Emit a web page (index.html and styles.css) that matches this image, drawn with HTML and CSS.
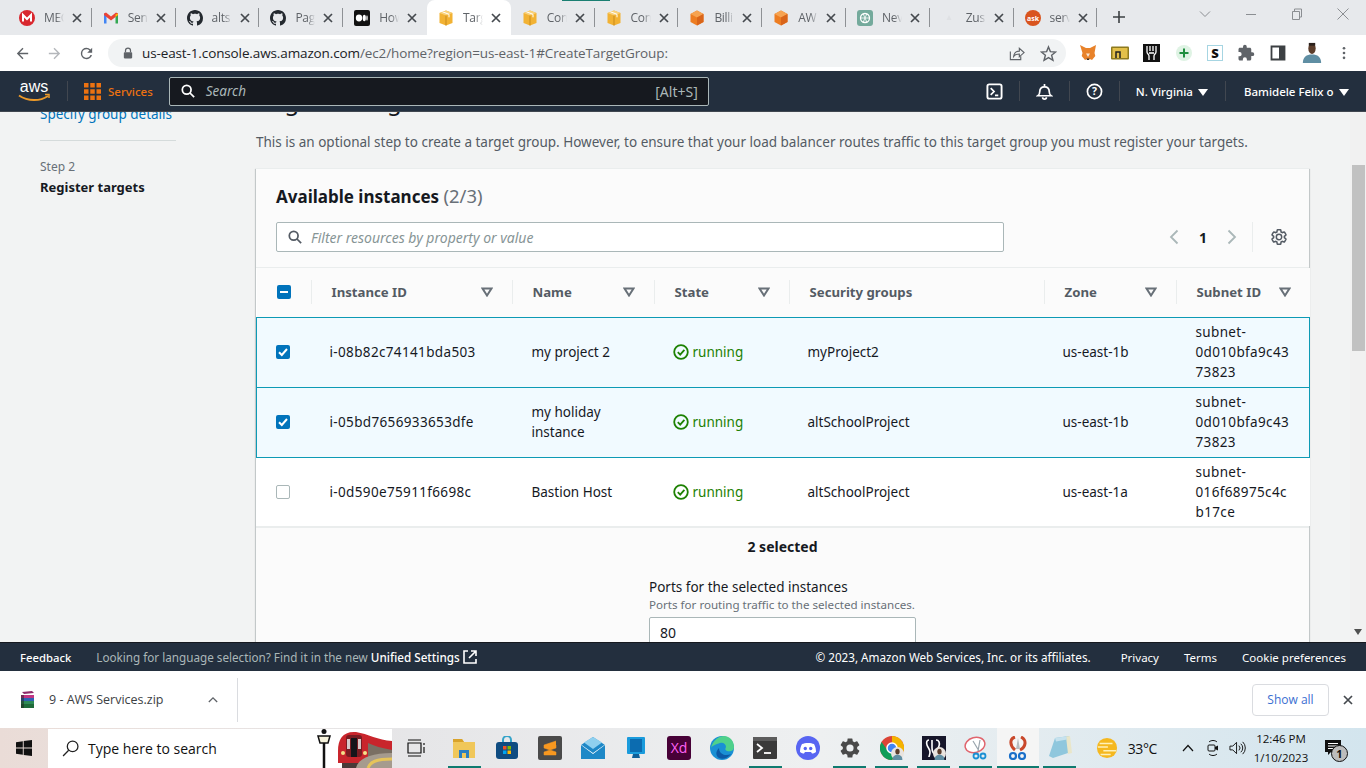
FILE: index.html
```html
<!DOCTYPE html>
<html lang="en">
<head>
    <meta charset="UTF-8">
    <meta name="viewport" content="width=device-width, initial-scale=1.0">
    <title>Target groups | EC2 Management Console</title>
    <link rel="stylesheet" href="styles.css">
</head>
<body>
    <svg class="sprite" aria-hidden="true">
        <symbol id="box" viewBox="0 0 16 16"><path d="M8 0.5 14.5 3v10L8 15.5 1.500 13V3z" fill="#f2b233"/><path d="M8 0.5 14.500 3 8 5.500 1.500 3z" fill="#f9d27c"/><path d="M8 5.500v10" stroke="#c98a1b"/><path d="M4.500 1.800 11 4.300v3" stroke="#fff" fill="none"/></symbol>
        <symbol id="cube" viewBox="0 0 16 16"><path d="M8 0.500 14.500 4v8L8 15.500 1.500 12V4z" fill="#ed7d22"/><path d="M8 0.500 14.500 4 8 7.500 1.500 4z" fill="#f6a351"/><path d="M8 7.500v8L14.500 12V4z" fill="#d9651a"/></symbol>
        <symbol id="github" viewBox="0 0 16 16"><path fill="#24292f" d="M8 0C3.580 0 0 3.580 0 8c0 3.540 2.290 6.530 5.470 7.590.4.070.55-.17.55-.38 0-.19-.01-.82-.01-1.490-2.010.37-2.530-.49-2.690-.94-.09-.23-.48-.94-.82-1.130-.28-.15-.68-.52-.01-.53.63-.01 1.080.58 1.230.82.720 1.210 1.870.87 2.330.66.070-.52.280-.87.510-1.070-1.780-.2-3.640-.89-3.640-3.950 0-.87.310-1.590.820-2.150-.08-.2-.36-1.020.08-2.120 0 0 .67-.21 2.200.82.640-.18 1.320-.27 2-.27.680 0 1.360.09 2 .27 1.530-1.040 2.200-.82 2.200-.82.44 1.100.16 1.920.08 2.120.51.560.82 1.270.82 2.150 0 3.070-1.870 3.750-3.650 3.950.29.25.54.73.54 1.480 0 1.070-.01 1.930-.01 2.200 0 .21.15.46.55.38A8.013 8.013 0 0 0 16 8c0-4.420-3.580-8-8-8z"/></symbol>
        <symbol id="gear" viewBox="0 0 24 24"><path d="M19.140 12.940c.04-.3.060-.61.060-.94 0-.32-.02-.64-.07-.94l2.030-1.580a.49.49 0 0 0 .12-.61l-1.920-3.320a.488.488 0 0 0-.59-.22l-2.390.96c-.5-.38-1.030-.7-1.620-.94l-.36-2.540a.484.484 0 0 0-.48-.41h-3.840c-.24 0-.43.17-.47.41l-.36 2.540c-.59.24-1.130.57-1.620.94l-2.390-.96c-.22-.08-.47 0-.59.22L2.740 8.870c-.12.21-.08.47.12.61l2.030 1.580c-.05.3-.09.63-.09.94s.02.64.07.94l-2.030 1.580a.49.49 0 0 0-.12.61l1.920 3.320c.12.22.37.29.59.22l2.390-.96c.5.38 1.030.7 1.620.94l.36 2.540c.05.24.24.41.48.41h3.840c.24 0 .44-.17.47-.41l.36-2.540c.59-.24 1.130-.56 1.620-.94l2.390.96c.22.08.47 0 .59-.22l1.920-3.320c.12-.22.070-.47-.12-.61l-2.010-1.580zM12 15.600A3.600 3.600 0 1 1 12 8.400a3.600 3.600 0 0 1 0 7.200z"/></symbol>
        <symbol id="sort" viewBox="0 0 12 10"><path d="M1.500 1.500h9L6 8.500z" fill="none" stroke="#687078" stroke-width="2"/></symbol>
        <symbol id="ok" viewBox="0 0 16 16"><circle cx="8" cy="8" r="6.800" fill="none" stroke="#1d8102" stroke-width="1.800"/><path d="M4.800 8.200 7.200 10.600 11.400 5.800" fill="none" stroke="#1d8102" stroke-width="1.800"/></symbol>
        <symbol id="tick" viewBox="0 0 14 14"><rect width="14" height="14" rx="2" fill="#0073bb"/><path d="M3 7.200 5.800 10 11 4" fill="none" stroke="#fff" stroke-width="2"/></symbol>
        <symbol id="minus" viewBox="0 0 14 14"><rect width="14" height="14" rx="2" fill="#0073bb"/><path d="M3 7h8" fill="none" stroke="#fff" stroke-width="2"/></symbol>
        <symbol id="close" viewBox="0 0 10 10"><path d="M1 1 9 9M9 1 1 9" stroke="#45494e" stroke-width="1.700"/></symbol>
        <symbol id="person" viewBox="0 0 24 24"><circle cx="12" cy="12" r="12" fill="#e9e4df"/><ellipse cx="12" cy="8.500" rx="4" ry="5.500" fill="#5b3d2b"/><path d="M3 24c0-7 4-9.500 9-9.500s9 2.500 9 9.500z" fill="#5f8ea3"/></symbol>
    </svg>

    <!-- browser tabs -->
    <div class="tabstrip">
        <div class="tab">
            <svg class="favicon" viewBox="0 0 16 16"><circle cx="8" cy="8" r="8" fill="#d9272e"/><path d="M4 11.500V5l4 4 4-4v6.500" fill="none" stroke="#fff" stroke-width="2"/></svg>
            <span class="tab-title">MEG</span><svg class="tab-close"><use href="#close"/></svg>
        </div>
        <div class="tab">
            <svg class="favicon" viewBox="0 0 16 16"><path d="M1 13.500V3.500l2.500 1v9z" fill="#4285f4"/><path d="M15 13.500V3.500l-2.500 1v9z" fill="#34a853"/><path d="M1 3.500 3 2.500 8 6.500 13 2.500 15 3.500 15 5 12.500 7 8 10.500 3.500 7 1 5z" fill="#ea4335"/><path d="M12.500 4.500 15 3.500V5l-2.500 2z" fill="#fbbc04"/></svg>
            <span class="tab-title">Sen</span><svg class="tab-close"><use href="#close"/></svg>
        </div>
        <div class="tab">
            <svg class="favicon"><use href="#github"/></svg>
            <span class="tab-title">alts</span><svg class="tab-close"><use href="#close"/></svg>
        </div>
        <div class="tab">
            <svg class="favicon"><use href="#github"/></svg>
            <span class="tab-title">Pag</span><svg class="tab-close"><use href="#close"/></svg>
        </div>
        <div class="tab tab-before-active">
            <svg class="favicon" viewBox="0 0 16 16"><rect width="16" height="16" rx="2" fill="#111"/><ellipse cx="5" cy="8" rx="3.200" ry="3.400" fill="#fff"/><ellipse cx="10.300" cy="8" rx="1.600" ry="3.200" fill="#fff"/><ellipse cx="13" cy="8" rx=".7" ry="2.800" fill="#fff"/></svg>
            <span class="tab-title">How</span><svg class="tab-close"><use href="#close"/></svg>
        </div>
        <div class="tab tab-active">
            <svg class="favicon"><use href="#box"/></svg>
            <span class="tab-title">Targ</span><svg class="tab-close"><use href="#close"/></svg>
        </div>
        <div class="tab tab-marked">
            <svg class="favicon"><use href="#box"/></svg>
            <span class="tab-title">Con</span><svg class="tab-close"><use href="#close"/></svg>
        </div>
        <div class="tab">
            <svg class="favicon"><use href="#box"/></svg>
            <span class="tab-title">Con</span><svg class="tab-close"><use href="#close"/></svg>
        </div>
        <div class="tab">
            <svg class="favicon"><use href="#cube"/></svg>
            <span class="tab-title">Billi</span><svg class="tab-close"><use href="#close"/></svg>
        </div>
        <div class="tab">
            <svg class="favicon"><use href="#cube"/></svg>
            <span class="tab-title">AW</span><svg class="tab-close"><use href="#close"/></svg>
        </div>
        <div class="tab">
            <svg class="favicon" viewBox="0 0 16 16"><rect width="16" height="16" rx="3" fill="#74aa9c"/><circle cx="8" cy="8" r="4.500" fill="none" stroke="#fff" stroke-width="1.300"/><path d="M6 3.500 10 12.500M3.500 8h9M10 3.500 6 12.500" stroke="#fff" stroke-width=".8"/></svg>
            <span class="tab-title">Nev</span><svg class="tab-close"><use href="#close"/></svg>
        </div>
        <div class="tab">
            <svg class="favicon" viewBox="0 0 16 16"><path d="M8 5 10.500 10h-5z" fill="#dfe1e4"/></svg>
            <span class="tab-title">Zus</span><svg class="tab-close"><use href="#close"/></svg>
        </div>
        <div class="tab">
            <svg class="favicon" viewBox="0 0 16 16"><circle cx="8" cy="8" r="8" fill="#d9541e"/><text x="8" y="10.500" font-size="7" font-weight="700" text-anchor="middle" fill="#fff">ask</text></svg>
            <span class="tab-title">serv</span><svg class="tab-close"><use href="#close"/></svg>
        </div>
        <svg class="new-tab" viewBox="0 0 14 14"><path d="M7 1v12M1 7h12" stroke="#3c4043" stroke-width="1.600"/></svg>
        <div class="window-controls">
            <svg viewBox="0 0 12 12"><path d="M1 3.500 6 8.500 11 3.500" fill="none" stroke="#8b8e92"/></svg>
            <svg viewBox="0 0 12 12"><path d="M1 6.500h10" stroke="#8b8e92"/></svg>
            <svg viewBox="0 0 12 12"><path d="M1.500 3.500h7v8h-7zM3.500 3.500v-2.500h7v8h-2" fill="none" stroke="#8b8e92"/></svg>
            <svg viewBox="0 0 12 12"><path d="M.5.5 11.500 11.500M11.500.5.5 11.500" stroke="#8b8e92"/></svg>
        </div>
    </div>

    <!-- address bar -->
    <div class="toolbar">
        <svg class="tool-btn" viewBox="0 0 24 24"><path fill="#5f6368" d="M20 11H7.800l5.600-5.600L12 4l-8 8 8 8 1.400-1.400L7.800 13H20z"/></svg>
        <svg class="tool-btn" viewBox="0 0 24 24"><path fill="#b4b7bb" d="M4 11h12.200l-5.600-5.600L12 4l8 8-8 8-1.400-1.400 5.600-5.600H4z"/></svg>
        <svg class="tool-btn" viewBox="0 0 24 24"><path fill="#5f6368" d="M17.650 6.350A7.960 7.960 0 0 0 12 4a8 8 0 1 0 7.730 10h-2.080A6 6 0 1 1 12 6c1.660 0 3.140.69 4.220 1.780L13 11h7V4l-2.350 2.350z"/></svg>
        <div class="omnibox">
            <svg class="lock" viewBox="0 0 12 14"><path d="M3 6V4a3 3 0 0 1 6 0v2" fill="none" stroke="#5f6368" stroke-width="1.500"/><rect x="1" y="6" width="10" height="7.500" rx="1" fill="#5f6368"/></svg>
            <span class="url"><b>us-east-1.console.aws.amazon.com</b>/ec2/home?region=us-east-1#CreateTargetGroup:</span>
            <svg class="omni-icon" viewBox="0 0 18 18"><path d="M2.500 7v8.500h11V12" fill="none" stroke="#5f6368" stroke-width="1.200"/><path d="M6 12c.5-4 3-5.500 6-5.500V3.500L17 8l-5 4.500V9.500c-2.500 0-4.500.5-6 2.500z" fill="none" stroke="#5f6368" stroke-width="1.200"/></svg>
            <svg class="omni-icon" viewBox="0 0 18 18"><path d="M9 2 11 7 16.500 7.400 12.300 10.900 13.700 16.200 9 13.300 4.300 16.200 5.700 10.900 1.500 7.400 7 7z" fill="none" stroke="#5f6368" stroke-width="1.500"/></svg>
        </div>
        <div class="extensions">
            <svg viewBox="0 0 18 18"><path d="M1 1 7 4h4l6-3-1.500 8 .8 3-3.300 4-1.500-.7H7.500L6 16l-3.300-4 .8-3z" fill="#e8822a"/><path d="M7 9.500 9 13l2-3.500" fill="#f7e5d3"/><path d="M7.500 14.500h3l-.6 1.500H8.100z" fill="#3c3228"/></svg>
            <svg viewBox="0 0 18 18"><rect y="2.500" width="18" height="13" rx="1" fill="#8d7a1f"/><rect x="1.500" y="4" width="15" height="10" fill="#e3c04a"/><path d="M5 14V8h4v6" fill="none" stroke="#222" stroke-width="1.500"/></svg>
            <svg viewBox="0 0 18 18"><rect width="17" height="18" fill="#111"/><path d="M4 2v6c0 2 2 2 2 4v4M13 2v6c0 2-2 2-2 4v4M7 2v5M10 2v5M6 9h5" fill="none" stroke="#fff" stroke-width="1.300"/></svg>
            <svg viewBox="0 0 18 18"><circle cx="9" cy="9" r="8" fill="#dff3e4"/><path d="M9 4.500v9M4.500 9h9" stroke="#1e8e3e" stroke-width="2"/></svg>
            <span class="ext-s">S</span>
            <svg viewBox="0 0 24 24"><path fill="#5f6368" d="M20.500 11H19V7c0-1.100-.9-2-2-2h-4V3.500a2.500 2.500 0 0 0-5 0V5H4c-1.100 0-2 .9-2 2v3.800h1.500a2.700 2.700 0 0 1 0 5.400H2V20c0 1.100.9 2 2 2h3.800v-1.500a2.700 2.700 0 0 1 5.400 0V22H17c1.100 0 2-.9 2-2v-4h1.500a2.500 2.500 0 0 0 0-5z"/></svg>
            <svg viewBox="0 0 18 18"><path d="M2.500 2.500h13v13h-13z" fill="none" stroke="#3c4043" stroke-width="1.800"/><rect x="10" y="3" width="5" height="12" fill="#3c4043"/></svg>
            <svg class="avatar" viewBox="0 0 24 24"><ellipse cx="12" cy="7" rx="4" ry="6" fill="#5b3d2b"/><rect x="8.500" y="1" width="7" height="3" fill="#2b211c"/><path d="M2 23c0-7 4-9.500 10-9.500S22 16 22 23z" fill="#5f8ea3"/></svg>
            <svg class="kebab" viewBox="0 0 4 16"><circle cx="2" cy="2.500" r="1.500" fill="#5f6368"/><circle cx="2" cy="8" r="1.500" fill="#5f6368"/><circle cx="2" cy="13.500" r="1.500" fill="#5f6368"/></svg>
        </div>
    </div>

    <!-- aws console nav -->
    <nav class="aws-nav">
        <svg class="aws-logo" viewBox="0 0 32 24"><text x="16" y="13" text-anchor="middle" font-size="16" fill="#fff">aws</text><path d="M1 16.500c9 6 21 6 29 .5" fill="none" stroke="#ec9a29" stroke-width="2"/><path d="M27 15.500h4v3.500" fill="none" stroke="#ec9a29" stroke-width="1.500"/></svg>
        <span class="nav-sep nav-sep-logo"></span>
        <svg class="services-icon" viewBox="0 0 17 17"><path fill="#ec7211" d="M0 0h4.500v4.500H0zM6.250 0h4.500v4.500h-4.500zM12.500 0H17v4.500h-4.500zM0 6.250h4.500v4.500H0zM6.250 6.250h4.500v4.500h-4.500zM12.500 6.250H17v4.500h-4.500zM0 12.500h4.500V17H0zM6.250 12.500h4.500V17h-4.500zM12.500 12.500H17V17h-4.500z"/></svg>
        <a class="services" href="#">Services</a>
        <div class="nav-search">
            <svg class="nav-search-icon" viewBox="0 0 16 16"><circle cx="6.500" cy="6.500" r="5" fill="none" stroke="#fff" stroke-width="2"/><path d="M10 10 15 15" stroke="#fff" stroke-width="2"/></svg>
            <span class="nav-search-text">Search</span>
            <span class="nav-search-key">[Alt+S]</span>
        </div>
        <svg class="nav-icon nav-icon-first" viewBox="0 0 18 18"><rect x="1.500" y="1.500" width="15" height="15" rx="2" fill="none" stroke="#fff" stroke-width="2"/><path d="M5 5.500 8.500 9 5 12.500M9.500 13H13" fill="none" stroke="#fff" stroke-width="1.800"/></svg>
        <span class="nav-sep"></span>
        <svg class="nav-icon" viewBox="0 0 18 18"><path d="M2 13.500c1.500-1 2-2 2-4.500 0-3 2-5 5-5s5 2 5 5c0 2.500.5 3.500 2 4.500z" fill="none" stroke="#fff" stroke-width="1.800"/><path d="M9 1v3M7 15a2 2 0 0 0 4 0" fill="none" stroke="#fff" stroke-width="1.800"/></svg>
        <span class="nav-sep"></span>
        <svg class="nav-icon" viewBox="0 0 18 18"><circle cx="9" cy="9" r="7.500" fill="none" stroke="#fff" stroke-width="1.800"/><text x="9" y="13" font-size="11" font-weight="700" text-anchor="middle" fill="#fff">?</text></svg>
        <span class="nav-sep"></span>
        <span class="nav-menu nav-region">N. Virginia<i class="caret"></i></span>
        <span class="nav-sep"></span>
        <span class="nav-menu nav-user">Bamidele Felix o<i class="caret"></i></span>
    </nav>

    <div class="page">
        <aside class="steps">
            <a href="#">Specify group details</a>
            <hr>
            <small>Step 2</small>
            <strong>Register targets</strong>
        </aside>

        <main class="main">
            <h1>Register targets</h1>
            <p class="intro">This is an optional step to create a target group. However, to ensure that your load balancer routes traffic to this target group you must register your targets.</p>

            <section class="card">
                <div class="card-head">
                    <h2>Available instances <span>(2/3)</span></h2>
                    <div class="filter-row">
                        <div class="filter">
                            <svg viewBox="0 0 16 16"><circle cx="6.500" cy="6.500" r="5" fill="none" stroke="#545b64" stroke-width="2"/><path d="M10 10 15 15" stroke="#545b64" stroke-width="2"/></svg>
                            <span>Filter resources by property or value</span>
                        </div>
                        <div class="pager">
                            <svg viewBox="0 0 10 16"><path d="M8.500 1.500 2 8l6.500 6.500" fill="none" stroke="#aab7b8" stroke-width="1.800"/></svg>
                            <b>1</b>
                            <svg viewBox="0 0 10 16"><path d="M1.500 1.500 8 8l-6.500 6.500" fill="none" stroke="#aab7b8" stroke-width="1.800"/></svg>
                        </div>
                        <span class="pager-sep"></span>
                        <svg class="settings"><use href="#gear"/></svg>
                    </div>
                </div>

                <table class="instances">
                    <colgroup>
                        <col class="col-check"><col class="col-id"><col class="col-name"><col class="col-state"><col class="col-sg"><col class="col-zone"><col class="col-subnet">
                    </colgroup>
                    <thead>
                        <tr>
                            <th><span class="th-box"><svg class="check"><use href="#minus"/></svg></span></th>
                            <th><div class="th-in">Instance ID<svg class="sort"><use href="#sort"/></svg></div></th>
                            <th><div class="th-in">Name<svg class="sort"><use href="#sort"/></svg></div></th>
                            <th><div class="th-in">State<svg class="sort"><use href="#sort"/></svg></div></th>
                            <th><div class="th-in">Security groups</div></th>
                            <th><div class="th-in">Zone<svg class="sort"><use href="#sort"/></svg></div></th>
                            <th><div class="th-in">Subnet ID<svg class="sort"><use href="#sort"/></svg></div></th>
                        </tr>
                    </thead>
                    <tbody>
                        <tr class="selected">
                            <td><svg class="check"><use href="#tick"/></svg></td>
                            <td>i-08b82c74141bda503</td>
                            <td>my project 2</td>
                            <td><span class="running"><svg><use href="#ok"/></svg>running</span></td>
                            <td>myProject2</td>
                            <td>us-east-1b</td>
                            <td>subnet-0d010bfa9c4373823</td>
                        </tr>
                        <tr class="selected">
                            <td><svg class="check"><use href="#tick"/></svg></td>
                            <td>i-05bd7656933653dfe</td>
                            <td>my holiday instance</td>
                            <td><span class="running"><svg><use href="#ok"/></svg>running</span></td>
                            <td>altSchoolProject</td>
                            <td>us-east-1b</td>
                            <td>subnet-0d010bfa9c4373823</td>
                        </tr>
                        <tr class="plain">
                            <td><span class="check-empty"></span></td>
                            <td>i-0d590e75911f6698c</td>
                            <td>Bastion Host</td>
                            <td><span class="running"><svg><use href="#ok"/></svg>running</span></td>
                            <td>altSchoolProject</td>
                            <td>us-east-1a</td>
                            <td>subnet-016f68975c4cb17ce</td>
                        </tr>
                    </tbody>
                </table>

                <div class="card-foot">
                    <p class="selected-count">2 selected</p>
                    <div class="ports">
                        <label>Ports for the selected instances</label>
                        <small>Ports for routing traffic to the selected instances.</small>
                        <div class="port-input">80</div>
                    </div>
                </div>
            </section>
        </main>

        <div class="scrollbar">
            <div class="thumb"></div>
            <svg class="scroll-arrow" viewBox="0 0 8 6"><path d="M0 0h8L4 6z" fill="#505050"/></svg>
        </div>
    </div>

    <footer class="aws-footer">
        <a class="feedback" href="#">Feedback</a>
        <span class="lang">Looking for language selection? Find it in the new <b>Unified Settings</b></span>
        <svg class="ext-link" viewBox="0 0 14 14"><path d="M5 1H1v12h12V9" fill="none" stroke="#fff" stroke-width="1.600"/><path d="M8 1h5v5M13 1 6 8" fill="none" stroke="#fff" stroke-width="1.600"/></svg>
        <span class="copy">© 2023, Amazon Web Services, Inc. or its affiliates.</span>
        <a href="#">Privacy</a>
        <a href="#">Terms</a>
        <a href="#">Cookie preferences</a>
    </footer>

    <!-- chrome download shelf -->
    <div class="shelf">
        <div class="download">
            <svg class="zip-icon" viewBox="0 0 16 18"><path d="M2 1l10-1 2 2-10 1z" fill="#8e2a6b"/><path d="M1 4h13v3H1z" fill="#c13584"/><path d="M1 7h13v3H1z" fill="#2f62b5"/><path d="M1 10h13v3H1z" fill="#2e8b57"/><path d="M1 13h13v4H1z" fill="#1f6b3a"/><path d="M1 4h3v13H1z" fill="#222" opacity=".5"/></svg>
            <span>9 - AWS Services.zip</span>
            <svg class="shelf-chev" viewBox="0 0 12 8"><path d="M1 7 6 2l5 5" fill="none" stroke="#5f6368" stroke-width="1.600"/></svg>
        </div>
        <button class="show-all">Show all</button>
        <svg class="shelf-close"><use href="#close"/></svg>
    </div>

    <div class="taskbar">
        <svg class="start" viewBox="0 0 16 16"><path fill="#111" d="M0 2.200 6.800 1.300v6.200H0zM7.700 1.100 16 0v7.500H7.700zM0 8.400h6.800v6.300L0 13.800zM7.700 8.400H16V16l-8.300-1.100z"/></svg>
        <div class="win-search">
            <svg viewBox="0 0 16 16"><circle cx="10" cy="6" r="5" fill="none" stroke="#222" stroke-width="1.200"/><path d="M6.300 9.700 1 15" stroke="#222" stroke-width="1.200"/></svg>
            <span>Type here to search</span>
            <svg class="doodle" viewBox="0 0 76 39">
                <path d="M8 10V39" stroke="#111" stroke-width="2.500"/><circle cx="8" cy="2.500" r="2.500" fill="#111"/><path d="M2 7h12l-2 7H4z" fill="#f6f3dc" stroke="#111" stroke-width="1.500"/>
                <path d="M76 12C62 11 52 5 40 3 27 2 22 10 22 22v12h54z" fill="#c9252c"/>
                <path d="M76 21C66 19 58 17 52 14v20h24z" fill="#7a6f63"/>
                <rect x="30" y="6" width="16" height="22" rx="3" fill="#7b1c22"/><rect x="35" y="9" width="6" height="19" fill="#15151a"/><rect x="31" y="10" width="3" height="10" fill="#d6c9c9"/><rect x="42" y="10" width="3" height="10" fill="#d6c9c9"/><circle cx="27" cy="24" r="2" fill="#f4e28a"/><circle cx="49" cy="24" r="2" fill="#f4e28a"/>
                <path d="M26 34h26v5H26z" fill="#4a3a38"/><path d="M40 39c2-9 14-15 36-15v15z" fill="#a59b8e"/><path d="M52 39c2-6 8-9 24-9" fill="none" stroke="#e6c45a" stroke-width="3"/>
            </svg>
        </div>
        <svg class="taskview" viewBox="0 0 18 18"><path d="M1 1h13M1 17h13M1 4h13v10H1zM17 4v2M17 8v6" fill="none" stroke="#111" stroke-width="1.200"/></svg>
        <div class="task-apps">
            <span class="app running-app"><svg viewBox="0 0 24 24"><path d="M1 3h9l2 3h11v16H1z" fill="#f0c75a"/><path d="M1 3h9l2 3H1z" fill="#d9a32b"/><path d="M7 22v-8h10v8h-3v-5h-4v5z" fill="#2b7fc2"/></svg></span>
            <span class="app"><svg viewBox="0 0 24 24"><path d="M8 6V4a4 4 0 0 1 8 0v2" fill="none" stroke="#35a4c9" stroke-width="2"/><rect x="1" y="6" width="22" height="17" rx="3" fill="#0f4c81"/><path fill="#f25022" d="M8 10h3.500v3.500H8z"/><path fill="#7fba00" d="M12.500 10H16v3.500h-3.500z"/><path fill="#00a4ef" d="M8 14.500h3.500V18H8z"/><path fill="#ffb900" d="M12.500 14.500H16V18h-3.500z"/></svg></span>
            <span class="app"><svg viewBox="0 0 24 24"><rect width="24" height="24" rx="2" fill="#4a4a4a"/><path d="M18 5 6 9v3l12 4v3L6 19v-3l12-4V9" fill="#f89820" stroke="#f89820" stroke-width=".5"/></svg></span>
            <span class="app"><svg viewBox="0 0 24 24"><path d="M0 9 12 1l12 8v14H0z" fill="#1e88c7"/><path d="M0 9l12 9 12-9v-.5L12 17 0 8.500z" fill="#fff"/><path d="M3 6.500 12 1l9 5.500L12 13z" fill="#8fd0ef"/></svg></span>
            <span class="app"><svg viewBox="0 0 24 24"><rect x="3" y="1" width="18" height="17" rx="1" fill="#1a9bdc"/><rect x="6" y="3" width="12" height="13" fill="#0c6cb0"/><path d="M9 18h6l1 4H8z" fill="#0f5f99"/></svg></span>
            <span class="app"><span class="xd">Xd</span></span>
            <span class="app"><svg viewBox="0 0 24 24"><circle cx="12" cy="12" r="12" fill="#1a90d4"/><path d="M1 12C3 4 9 0 14 0c6 0 10 5 10 11 0 4-4 5-7 4-2-1-2-2-1-4 0-3-3-5-6-4-4 1-8 3-9 5z" fill="#4fd18b"/><path d="M9 12c0 5 5 9 12 6-3 4-8 6-12 4-3-2-4-6 0-10z" fill="#0c5aa6"/></svg></span>
            <span class="app running-app"><svg viewBox="0 0 24 24"><rect y="1" width="24" height="22" rx="1" fill="#3a3a3a"/><rect y="1" width="24" height="4" fill="#5c5c5c"/><path d="M4 8 9 12 4 16" fill="none" stroke="#fff" stroke-width="1.800"/><path d="M11 17h7" stroke="#fff" stroke-width="1.800"/></svg></span>
            <span class="app"><svg viewBox="0 0 24 24"><circle cx="12" cy="12" r="12" fill="#5865f2"/><path d="M6 8c3-1.500 9-1.500 12 0 1.500 2.500 2 5.500 2 8-1.500 1-3 1.500-4 1.500l-1-1.500h-6l-1 1.500c-1 0-2.500-.5-4-1.500 0-2.500.5-5.500 2-8z" fill="#fff"/><circle cx="9.300" cy="12.500" r="1.700" fill="#5865f2"/><circle cx="14.700" cy="12.500" r="1.700" fill="#5865f2"/></svg></span>
            <span class="app running-app"><svg fill="#4a4a4a"><use href="#gear"/></svg></span>
            <span class="app running-app"><svg viewBox="0 0 24 24"><circle cx="12" cy="12" r="12" fill="#db4437"/><path d="M12 0a12 12 0 0 1 10.400 6H12z" fill="#f4b400"/><path d="M22.400 6A12 12 0 0 1 12 24l5-9-5-9z" fill="#f4b400"/><path d="M1.600 6A12 12 0 0 0 12 24l5-9H8z" fill="#0f9d58"/><circle cx="12" cy="12" r="5" fill="#4285f4" stroke="#fff" stroke-width="1.500"/><use href="#person" x="11" y="11" width="13" height="13"/></svg></span>
            <span class="app running-app"><svg viewBox="0 0 24 24"><rect width="24" height="24" fill="#16162a"/><path d="M7 4c-2 0-3 2-2 5s3 4 3 7-1 4-1 5M10 4v8c0 4 2 6 3 6M14 4c3 0 4 3 3 6s-3 5-3 8" fill="none" stroke="#fff" stroke-width="1.600"/><use href="#person" x="11" y="11" width="13" height="13"/></svg></span>
            <span class="app running-app"><svg viewBox="0 0 24 24"><ellipse cx="11" cy="9" rx="10" ry="7.500" transform="rotate(-15 11 9)" fill="#fff" stroke="#e0656e" stroke-width="1.500"/><path d="M9 5 15 15M16 4 14 15" stroke="#9aa5ad" stroke-width="1.200"/><circle cx="12" cy="20" r="2.500" fill="none" stroke="#1a90d4" stroke-width="1.800"/><circle cx="19" cy="20" r="2.500" fill="none" stroke="#1a90d4" stroke-width="1.800"/></svg></span>
            <span class="app running-app app-focus"><svg viewBox="0 0 24 24"><path d="M9 1C3 3 4 10 9 14M15 1c6 3 5 10-1 13" fill="none" stroke="#c9482b" stroke-width="3"/><path d="M12 2 10 13l4 0z" fill="#b7bcc0"/><circle cx="7" cy="20" r="3" fill="none" stroke="#1a6fc9" stroke-width="2.200"/><circle cx="16" cy="20" r="3" fill="none" stroke="#1a6fc9" stroke-width="2.200"/></svg></span>
            <span class="app running-app"><svg viewBox="0 0 24 24"><path d="M7 2 21 0l2 16-18 6-4-2z" fill="#8fc7dd"/><path d="M18 0.500 22 0l2 17-4 1z" fill="#e9e6c9"/><path d="M7 2 18 .5l1 3-11 2z" fill="#c6e2ee"/></svg></span>
        </div>
        <div class="tray">
            <svg class="weather" viewBox="0 0 24 24"><circle cx="12" cy="12" r="11" fill="#f5b81f"/><path d="M4 7h14M2 11h11M8 15h14M5 19h11" stroke="#fff0b8" stroke-width="1.600"/></svg>
            <span class="temp">33°C</span>
            <svg class="tray-chev" viewBox="0 0 12 8"><path d="M1 7 6 1.500 11 7" fill="none" stroke="#111" stroke-width="1.200"/></svg>
            <svg class="tray-cam" viewBox="0 0 14 18"><path d="M3 3c2-2 6-2 8 0M3 15c2 2 6 2 8 0" fill="none" stroke="#111"/><rect x="2" y="6" width="7" height="6" rx="1" fill="none" stroke="#111"/><path d="M9 8l3-1.500v5L9 10z" fill="#111"/></svg>
            <svg class="tray-vol" viewBox="0 0 18 16"><path d="M1 6h3l4-4v12l-4-4H1z" fill="none" stroke="#111"/><path d="M10.500 5.500a3.500 3.500 0 0 1 0 5M12.500 3.500a6 6 0 0 1 0 9M14.500 1.500a9 9 0 0 1 0 13" fill="none" stroke="#111"/></svg>
            <div class="clock"><span>12:46 PM</span><span>1/10/2023</span></div>
            <div class="notify">
                <svg viewBox="0 0 16 16"><path d="M0 0h16v12H6l-3 3v-3H0z" fill="#111"/><path d="M3 3.500h10M3 6h10M3 8.500h10" stroke="#fff"/></svg>
                <span class="notify-badge">1</span>
            </div>
        </div>
    </div>
</body>
</html>
```

FILE: styles.css
```css
* {
    box-sizing: border-box;
}
html, body {
    height: 100%;
}
body {
    margin: 0;
    height: 768px;
    overflow: hidden;
    display: flex;
    flex-direction: column;
    font-family: "Noto Sans", "Open Sans", Arial, sans-serif;
    font-size: 14px;
    color: #16191f;
    background-color: #f2f3f3;
}
a {
    text-decoration: none;
}
svg {
    flex: none;
    display: block;
}
.sprite {
    display: none;
}

/* browser tabs */
.tabstrip {
    height: 35px;
    flex: none;
    display: flex;
    padding-left: 8px;
    background-color: #e7e9ec;
    font-family: "Open Sans", Arial, sans-serif;
    font-size: 12px;
    color: #5f6368;
}
.tab {
    position: relative;
    width: 83.8px;
    height: 35px;
    flex: none;
    display: flex;
    align-items: center;
    padding-left: 11px;
}
.tab::after {
    content: "";
    width: 1px;
    height: 19px;
    margin-left: auto;
    background-color: #8e9195;
}
.tab-active {
    background-color: #fff;
    border-radius: 8px 8px 0 0;
}
.tab-active::after, .tab-before-active::after {
    background-color: transparent;
}
.tab-marked::before {
    content: "";
    position: absolute;
    top: 0;
    left: 51px;
    width: 48px;
    height: 1px;
    background-color: #1a7f72;
}
.favicon {
    width: 16px;
    height: 16px;
}
.tab-title {
    width: 20px;
    margin-left: 9px;
    white-space: nowrap;
    letter-spacing: -.3px;
    -webkit-mask-image: linear-gradient(90deg, #000 60%, transparent 100%);
    mask-image: linear-gradient(90deg, #000 60%, transparent 100%);
}
.tab-close {
    width: 10px;
    height: 10px;
    margin-left: 8px;
}
.new-tab {
    width: 14px;
    height: 14px;
    margin: 10px 0 0 15px;
}
.window-controls {
    margin-left: auto;
    display: flex;
    align-items: flex-start;
    padding: 8px 17px 0 0;
    gap: 34px;
}
.window-controls svg {
    width: 12px;
    height: 12px;
}

/* address bar */
.toolbar {
    height: 36px;
    flex: none;
    display: flex;
    align-items: center;
    padding-left: 14px;
    background-color: #fff;
}
.tool-btn {
    width: 17px;
    height: 17px;
    margin-right: 15px;
}
.omnibox {
    width: 958px;
    height: 28px;
    margin-left: -2px;
    display: flex;
    align-items: center;
    padding: 0 9px 0 15px;
    border-radius: 14px;
    background-color: #f1f3f4;
    font-family: "Open Sans", Arial, sans-serif;
    font-size: 13.5px;
    color: #5f6368;
}
.lock {
    width: 10px;
    height: 12px;
}
.url {
    margin-left: 9px;
    letter-spacing: -.12px;
}
.url b {
    font-weight: 400;
    color: #202124;
}
.omni-icon {
    width: 17px;
    height: 17px;
    margin-left: 15px;
}
.url + .omni-icon {
    margin-left: auto;
}
.extensions {
    display: flex;
    align-items: center;
    margin-left: 13px;
    gap: 14px;
}
.extensions svg {
    width: 18px;
    height: 18px;
}
.extensions .avatar {
    width: 22px;
    height: 24px;
}
.extensions .kebab {
    width: 4px;
    height: 14px;
    margin-left: 5px;
}
.ext-s {
    width: 16px;
    height: 16px;
    border: 1px solid #a6d5e2;
    font-family: "Open Sans", Arial, sans-serif;
    font-size: 13px;
    line-height: 14px;
    font-weight: 800;
    text-align: center;
    color: #111;
}

/* aws nav */
.aws-nav {
    height: 41px;
    flex: none;
    display: flex;
    align-items: center;
    padding-left: 18px;
    background-color: #232f3e;
    border-bottom: 1px solid #414750;
    color: #fff;
    font-size: 11.5px;
}
.aws-logo {
    width: 32px;
    height: 24px;
}
.aws-logo text {
    font-family: "Liberation Sans", Arial, sans-serif;
}
.nav-sep {
    width: 1px;
    height: 20px;
    flex: none;
    background-color: #414750;
}
.nav-sep-logo {
    margin-left: 17px;
}
.services-icon {
    width: 17px;
    height: 17px;
    margin-left: 16px;
}
.services {
    margin-left: 7px;
    color: #ec7211;
    font-weight: 500;
}
.nav-search {
    width: 540px;
    height: 29px;
    margin-left: 16px;
    display: flex;
    align-items: center;
    padding: 0 10px 0 11px;
    background-color: #16191f;
    border: 1px solid #aab7b8;
    border-radius: 2px;
    color: #aab7b8;
    font-size: 13.5px;
}
.nav-search-icon {
    width: 14px;
    height: 14px;
}
.nav-search-text {
    margin-left: 11px;
    font-style: italic;
}
.nav-search-key {
    margin-left: auto;
    font-size: 14px;
}
.nav-icon {
    width: 17px;
    height: 17px;
    margin: 0 16px;
}
.nav-icon-first {
    margin-left: 277px;
}
.nav-icon text {
    font-family: "Noto Sans", sans-serif;
}
.nav-menu {
    font-weight: 500;
    white-space: nowrap;
}
.nav-region {
    margin: 0 17px 0 16px;
}
.nav-user {
    margin-left: 18px;
}
.caret {
    display: inline-block;
    width: 0;
    height: 0;
    margin-left: 5px;
    border-style: solid;
    border-width: 7px 5px 0;
    border-color: #fff transparent transparent;
}

/* page */
.page {
    flex: 1;
    min-height: 0;
    display: flex;
    overflow: hidden;
}
.steps {
    width: 256px;
    flex: none;
    display: flex;
    flex-direction: column;
    padding-left: 40px;
    margin-top: -8px;
}
.steps a {
    color: #0073bb;
    font-size: 13.5px;
    line-height: 20px;
}
.steps hr {
    width: 136px;
    margin: 16px 0 16px;
    border: 0;
    border-top: 1px solid #d5dbdb;
}
.steps small {
    font-size: 12px;
    line-height: 20px;
    color: #687078;
}
.steps strong {
    font-size: 13px;
    line-height: 20px;
    font-weight: 700;
}
.main {
    width: 1053px;
    flex: none;
    margin-top: -26px;
}
.main h1 {
    margin: 0;
    font-size: 24px;
    line-height: 30px;
    font-weight: 400;
}
.intro {
    margin: 16px 0 0;
    font-size: 13.5px;
    line-height: 20px;
    color: #545b64;
    white-space: nowrap;
}
.card {
    margin-top: 16px;
    background-color: #fff;
    border-top: 1px solid #eaeded;
    box-shadow: 0 1px 1px rgba(0, 28, 36, .3), 1px 1px 1px rgba(0, 28, 36, .15), -1px 1px 1px rgba(0, 28, 36, .15);
}
.card-head {
    height: 99px;
    padding: 14px 20px 0;
    background-color: #fbfbfb;
    border-bottom: 1px solid #eaeded;
}
.card-head h2 {
    margin: 0;
    font-size: 17px;
    line-height: 26px;
    font-weight: 700;
}
.card-head h2 span {
    font-size: 18.4px;
    font-weight: 400;
    color: #687078;
}
.filter-row {
    display: flex;
    align-items: center;
    margin-top: 12px;
}
.filter {
    width: 728px;
    height: 30px;
    display: flex;
    align-items: center;
    padding-left: 11px;
    background-color: #fff;
    border: 1px solid #aab7b8;
    border-radius: 2px;
    font-size: 14px;
    font-style: italic;
    color: #879596;
}
.filter svg {
    width: 14px;
    height: 14px;
    margin-right: 9px;
}
.pager {
    margin-left: auto;
    display: flex;
    align-items: center;
    gap: 20px;
}
.pager svg {
    width: 10px;
    height: 16px;
}
.pager b {
    font-size: 14px;
    font-weight: 700;
}
.pager-sep {
    width: 1px;
    height: 30px;
    margin: 0 17px 0 15px;
    background-color: #eaeded;
}
.settings {
    width: 18px;
    height: 18px;
    margin-right: 1px;
    fill: none;
    stroke: #545b64;
    stroke-width: 2;
}

/* instances table */
.instances {
    width: 100%;
    table-layout: fixed;
    border-collapse: collapse;
    background-color: #fff;
}
.col-check { width: 54px; }
.col-id { width: 201px; }
.col-name { width: 142px; }
.col-state { width: 135px; }
.col-sg { width: 255px; }
.col-zone { width: 132px; }
.col-subnet { width: 134px; }
.instances th {
    height: 49px;
    padding: 0;
    background-color: #fbfbfb;
    font-size: 13.2px;
    font-weight: 700;
    text-align: left;
    color: #545b64;
}
.th-box {
    display: block;
    padding-left: 20px;
}
.th-in {
    height: 24px;
    display: flex;
    align-items: center;
    justify-content: space-between;
    padding: 0 19px 0 20px;
    border-left: 1px solid #eaeded;
}
.sort {
    width: 12px;
    height: 10px;
}
.instances td {
    height: 70px;
    padding: 0 18px 0 19px;
    font-size: 13.5px;
    line-height: 20px;
    color: #16191f;
    overflow-wrap: anywhere;
}
.instances td:nth-child(2), .instances td:last-child {
    letter-spacing: .35px;
}
.instances td:nth-child(3), .instances td:last-child {
    padding-left: 20px;
    padding-right: 17px;
}
.instances .plain td {
    height: 69px;
}
.selected td {
    background-color: #f1faff;
    border-top: 1px solid #0d9ab5;
    border-bottom: 1px solid #0d9ab5;
}
.selected td:first-child {
    border-left: 1px solid #0d9ab5;
}
.selected td:last-child {
    border-right: 1px solid #0d9ab5;
}
.check {
    width: 14px;
    height: 14px;
}
.check-empty {
    display: block;
    width: 14px;
    height: 14px;
    background-color: #fff;
    border: 1px solid #aab7b8;
    border-radius: 2px;
}
.running {
    display: flex;
    align-items: center;
    color: #1d8102;
}
.running svg {
    width: 16px;
    height: 16px;
    margin-right: 4px;
}

.card-foot {
    height: 200px;
    padding-top: 9px;
    background-color: #fbfbfb;
    border-top: 2px solid #eaeded;
}
.selected-count {
    margin: 0;
    font-weight: 700;
    line-height: 20px;
    text-align: center;
}
.ports {
    width: 267px;
    margin: 20px 0 0 393px;
    display: flex;
    flex-direction: column;
}
.ports label {
    font-size: 13.5px;
    line-height: 20px;
}
.ports small {
    font-size: 11.6px;
    line-height: 16px;
    color: #687078;
    white-space: nowrap;
}
.port-input {
    height: 32px;
    margin-top: 4px;
    padding: 5px 10px;
    background-color: #fff;
    border: 1px solid #aab7b8;
    border-radius: 2px;
}
.scrollbar {
    width: 16px;
    margin-left: auto;
    display: flex;
    flex-direction: column;
    align-items: center;
    padding-top: 53px;
    background-color: #f1f1f1;
}
.thumb {
    width: 13px;
    height: 186px;
    background-color: #c1c1c1;
}
.scroll-arrow {
    width: 8px;
    height: 6px;
    margin-top: auto;
    margin-bottom: 7px;
}

/* aws footer */
.aws-footer {
    height: 29px;
    flex: none;
    display: flex;
    align-items: center;
    padding: 0 20px;
    background-color: #232f3e;
    border-top: 1px solid #16191f;
    font-size: 11.7px;
    color: #d5dbdb;
}
.aws-footer a {
    color: #fff;
    margin-left: 25px;
    font-size: 11.5px;
}
.aws-footer .feedback {
    margin-left: 0;
    font-size: 11.3px;
    font-weight: 500;
}
.lang {
    margin-left: 25px;
    color: #aab7b8;
}
.lang b {
    font-weight: 500;
    color: #fff;
}
.ext-link {
    width: 14px;
    height: 14px;
    margin-left: 3px;
}
.copy {
    margin-left: auto;
    margin-right: 5px;
    color: #fff;
}

/* download shelf */
.shelf {
    height: 57px;
    flex: none;
    display: flex;
    align-items: center;
    background-color: #fff;
    font-family: "Open Sans", Arial, sans-serif;
    font-size: 12.5px;
    color: #3c4043;
}
.download {
    width: 238px;
    height: 44px;
    display: flex;
    align-items: center;
    padding-left: 20px;
    border-right: 1px solid #dadce0;
}
.zip-icon {
    width: 16px;
    height: 18px;
    margin-right: 13px;
}
.shelf-chev {
    width: 10px;
    height: 7px;
    margin-left: auto;
    margin-right: 19px;
}
.show-all {
    width: 77px;
    height: 32px;
    margin-left: auto;
    background-color: #fff;
    border: 1px solid #dadce0;
    border-radius: 4px;
    font-family: "Open Sans", Arial, sans-serif;
    font-size: 12px;
    font-weight: 500;
    color: #3b6fd1;
}
.shelf-close {
    width: 10px;
    height: 10px;
    margin: 0 13px 0 14px;
}

/* windows taskbar */
.taskbar {
    height: 40px;
    flex: none;
    display: flex;
    align-items: center;
    background: linear-gradient(90deg, #eadcd7 0, #e6e6e8 30%, #eef0f1 60%, #d3e5ee 100%);
    font-family: "Open Sans", Arial, sans-serif;
    color: #111;
}
.start {
    width: 16px;
    height: 16px;
    margin: 0 16px;
}
.win-search {
    width: 344px;
    height: 39px;
    margin-top: 1px;
    display: flex;
    align-items: center;
    padding-left: 14px;
    background-color: #fff;
    font-size: 14px;
}
.win-search > svg:first-child {
    width: 17px;
    height: 17px;
    margin-right: 9px;
}
.doodle {
    width: 76px;
    height: 39px;
    margin-left: auto;
}
.taskview {
    width: 18px;
    height: 18px;
    margin: 0 17.5px 0 15px;
}
.task-apps {
    display: flex;
    height: 40px;
}
.app {
    width: 43px;
    display: flex;
    align-items: center;
    justify-content: center;
}
.app:nth-child(n+9) {
    width: 42px;
}
.app svg {
    width: 24px;
    height: 24px;
}
.running-app {
    background: linear-gradient(#0f7b70, #0f7b70) center bottom / 33px 2px no-repeat;
}
.app-focus {
    background: linear-gradient(#0f7b70, #0f7b70) center bottom / 100% 2px no-repeat, #f5f5f5;
}
.xd {
    width: 24px;
    height: 24px;
    border-radius: 3px;
    background-color: #470137;
    color: #ff61f6;
    font-size: 14px;
    line-height: 24px;
    text-align: center;
}
.tray {
    margin-left: auto;
    display: flex;
    align-items: center;
    font-size: 11.5px;
}
.weather {
    width: 22px;
    height: 22px;
}
.temp {
    margin: 0 25px 0 10px;
    font-size: 14px;
    letter-spacing: -.4px;
}
.tray-chev {
    width: 12px;
    height: 8px;
    margin-right: 12px;
}
.tray-cam {
    width: 14px;
    height: 18px;
    margin-right: 9px;
}
.tray-vol {
    width: 17px;
    height: 16px;
    margin-right: 5px;
}
.clock {
    width: 60px;
    display: flex;
    flex-direction: column;
    align-items: center;
    line-height: 19px;
}
.notify {
    position: relative;
    width: 16px;
    margin: 0 25px 0 14px;
}
.notify svg {
    width: 16px;
    height: 16px;
}
.notify-badge {
    position: absolute;
    top: 5px;
    left: 6px;
    width: 17px;
    height: 17px;
    border: 1px solid #111;
    border-radius: 50%;
    background-color: #bcbcbc;
    font-size: 11px;
    font-weight: 700;
    line-height: 15px;
    text-align: center;
}
```
